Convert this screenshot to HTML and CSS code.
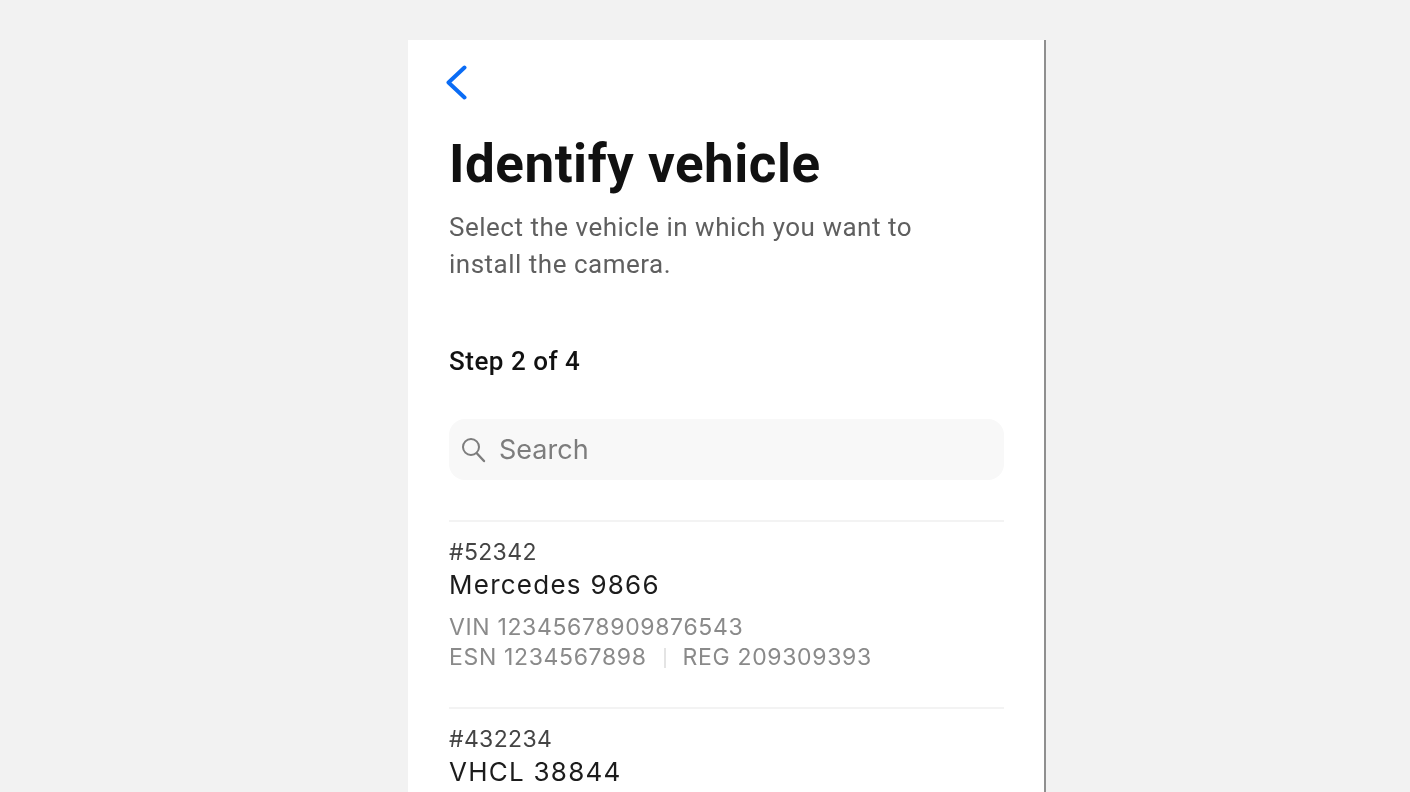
FILE: index.html
```html
<!DOCTYPE html>
<html lang="en">

<head>
    <meta charset="UTF-8">
    <title>Identify vehicle</title>
    <link rel="stylesheet" href="styles.css">
</head>

<body>
    <div class="phone">
        <a class="back" href="#">
            <svg width="24" height="38" viewBox="0 0 24 38">
                <path d="M20.5 3.5 L4.5 18.5 L20.5 33.5" fill="none" stroke="#0a6cf5" stroke-width="4" stroke-linecap="round" stroke-linejoin="round" />
            </svg>
        </a>
        <h1>Identify vehicle</h1>
        <p class="intro">Select the vehicle in which you want to<br>install the camera.</p>
        <p class="step">Step 2 of 4</p>
        <div class="search">
            <svg width="26" height="28" viewBox="0 0 26 28">
                <circle cx="10" cy="11" r="8" fill="none" stroke="#7d7d7d" stroke-width="2" />
                <path d="M16 17.5 L23 25" fill="none" stroke="#7d7d7d" stroke-width="2.4" stroke-linecap="round" />
            </svg>
            <span>Search</span>
        </div>
        <div class="item">
            <div class="num">#52342</div>
            <div class="name">Mercedes 9866</div>
            <div class="meta first">VIN 12345678909876543</div>
            <div class="meta">ESN 1234567898<span class="sep"></span>REG 209309393</div>
        </div>
        <div class="item">
            <div class="num">#432234</div>
            <div class="name">VHCL 38844</div>
        </div>
    </div>
</body>

</html>
```

FILE: styles.css
```css
* {
    margin: 0;
    padding: 0;
    box-sizing: border-box;
}

html,
body {
    height: 792px;
    overflow: hidden;
}

body {
    background-color: #f2f2f2;
    padding-top: 40px;
    font-family: Inter, "Liberation Sans", sans-serif;
}

.phone {
    width: 638px;
    height: 752px;
    margin-left: 408px;
    padding: 24px 41px 0;
    background-color: #fff;
    border-right: 2px solid #8f8f8f;
    overflow: hidden;
}

/* the source frame is slightly soft */
.phone>* {
    filter: blur(0.4px);
}

.back {
    display: block;
    height: 38px;
    margin-left: -5px;
}

h1 {
    margin-top: 31px;
    font-family: Roboto, sans-serif;
    font-size: 53px;
    font-weight: 700;
    line-height: 62px;
    letter-spacing: 0.5px;
    color: #111;
}

.intro {
    margin-top: 14px;
    font-family: Roboto, sans-serif;
    font-size: 26px;
    line-height: 37px;
    letter-spacing: 0.5px;
    color: #5f5f5f;
}

.step {
    margin-top: 63px;
    font-family: Roboto, sans-serif;
    font-size: 26px;
    font-weight: 500;
    line-height: 30px;
    letter-spacing: 0.5px;
    color: #111;
}

.search {
    display: flex;
    align-items: center;
    gap: 12px;
    width: 555px;
    height: 61px;
    margin-top: 43px;
    padding-left: 12px;
    background-color: #f8f8f8;
    border-radius: 16px;
    font-size: 27px;
    color: #7d7d7d;
}

.item {
    width: 555px;
    margin-top: 40px;
    padding-top: 16px;
    border-top: 2px solid #f3f3f3;
}

.item+.item {
    margin-top: 35px;
}

.num {
    font-size: 23px;
    line-height: 28px;
    letter-spacing: 0.35px;
    color: #444;
}

.name {
    margin-top: 3px;
    font-size: 26px;
    line-height: 32px;
    letter-spacing: 1.25px;
    color: #1c1c1c;
}

.meta {
    font-size: 23px;
    line-height: 30px;
    letter-spacing: 0.65px;
    color: #8a8a8a;
}

.first {
    margin-top: 11px;
}

.sep {
    display: inline-block;
    width: 2px;
    height: 20px;
    margin: 0 17px;
    background-color: #e4e4e4;
    vertical-align: -3px;
}
```
